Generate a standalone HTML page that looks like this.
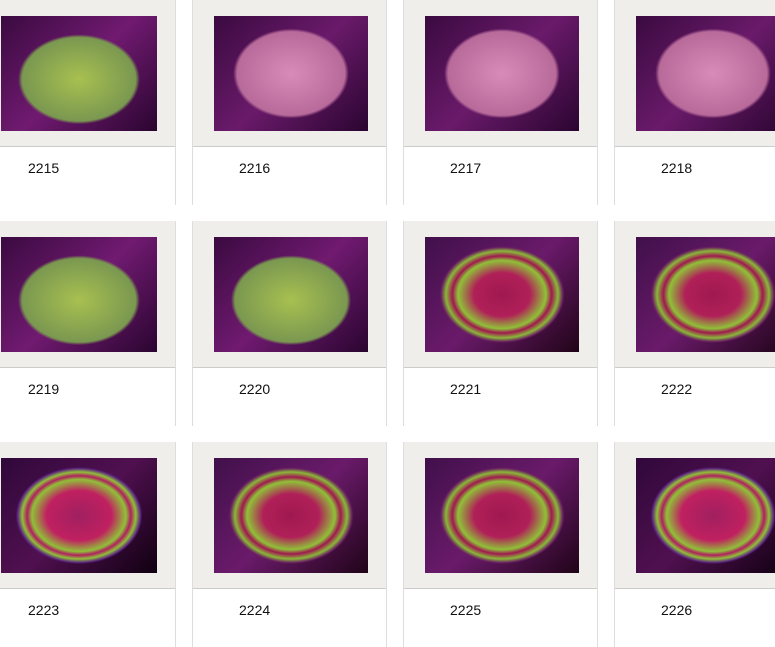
<!DOCTYPE html><html><head><style>
body{margin:0;width:775px;height:625px;overflow:hidden;background:#fff;font-family:"Liberation Sans",sans-serif;position:relative}
.c{position:absolute;width:195px;height:205px;border-left:1px solid #ddd;border-right:1px solid #ddd;box-sizing:border-box}
.g{position:absolute;left:0;top:0;right:0;height:146px;background:#efeeea;border-bottom:1px solid #ccc}
.i{position:absolute;left:21px;top:16px;width:154px;height:115px}
.t{position:absolute;left:46px;top:160px;font-size:14px;color:#111}
.p{background:radial-gradient(ellipse 50% 52% at 50% 50%,#d88ab8 0,#b86a9a 70%,transparent 75%),linear-gradient(135deg,#3a0a40,#6a1a6a 50%,#2a0530)}
.y{background:radial-gradient(ellipse 52% 52% at 50% 55%,#a8c050 0,#7a9850 70%,transparent 75%),linear-gradient(135deg,#3a0a40,#701a70 50%,#2a0530)}
.r{background:radial-gradient(ellipse 52% 54% at 50% 50%,#a01850 0,#b02058 35%,#90c038 55%,#a01850 62%,#8ab838 70%,#6a2060 76%,transparent 78%),linear-gradient(135deg,#40104a,#6a1a6a 50%,#200418)}
.q{background:radial-gradient(ellipse 52% 54% at 50% 50%,#a02060 0,#c02060 40%,#90c038 58%,#b02060 64%,#90c038 70%,#5a2080 76%,transparent 78%),linear-gradient(135deg,#30083a,#501050 50%,#100010)}
</style></head><body>
<div class="c" style="left:-19px;top:0"><div class="g"><div class="i y" style="left:19px;width:156px"></div></div><div class="t">2215</div></div>
<div class="c" style="left:192px;top:0"><div class="g"><div class="i p"></div></div><div class="t">2216</div></div>
<div class="c" style="left:403px;top:0"><div class="g"><div class="i p"></div></div><div class="t">2217</div></div>
<div class="c" style="left:614px;top:0"><div class="g"><div class="i p"></div></div><div class="t">2218</div></div>
<div class="c" style="left:-19px;top:221px"><div class="g"><div class="i y" style="left:19px;width:156px"></div></div><div class="t">2219</div></div>
<div class="c" style="left:192px;top:221px"><div class="g"><div class="i y"></div></div><div class="t">2220</div></div>
<div class="c" style="left:403px;top:221px"><div class="g"><div class="i r"></div></div><div class="t">2221</div></div>
<div class="c" style="left:614px;top:221px"><div class="g"><div class="i r"></div></div><div class="t">2222</div></div>
<div class="c" style="left:-19px;top:442px"><div class="g"><div class="i q" style="left:19px;width:156px"></div></div><div class="t">2223</div></div>
<div class="c" style="left:192px;top:442px"><div class="g"><div class="i r"></div></div><div class="t">2224</div></div>
<div class="c" style="left:403px;top:442px"><div class="g"><div class="i r"></div></div><div class="t">2225</div></div>
<div class="c" style="left:614px;top:442px"><div class="g"><div class="i q"></div></div><div class="t">2226</div></div>
</body></html>
